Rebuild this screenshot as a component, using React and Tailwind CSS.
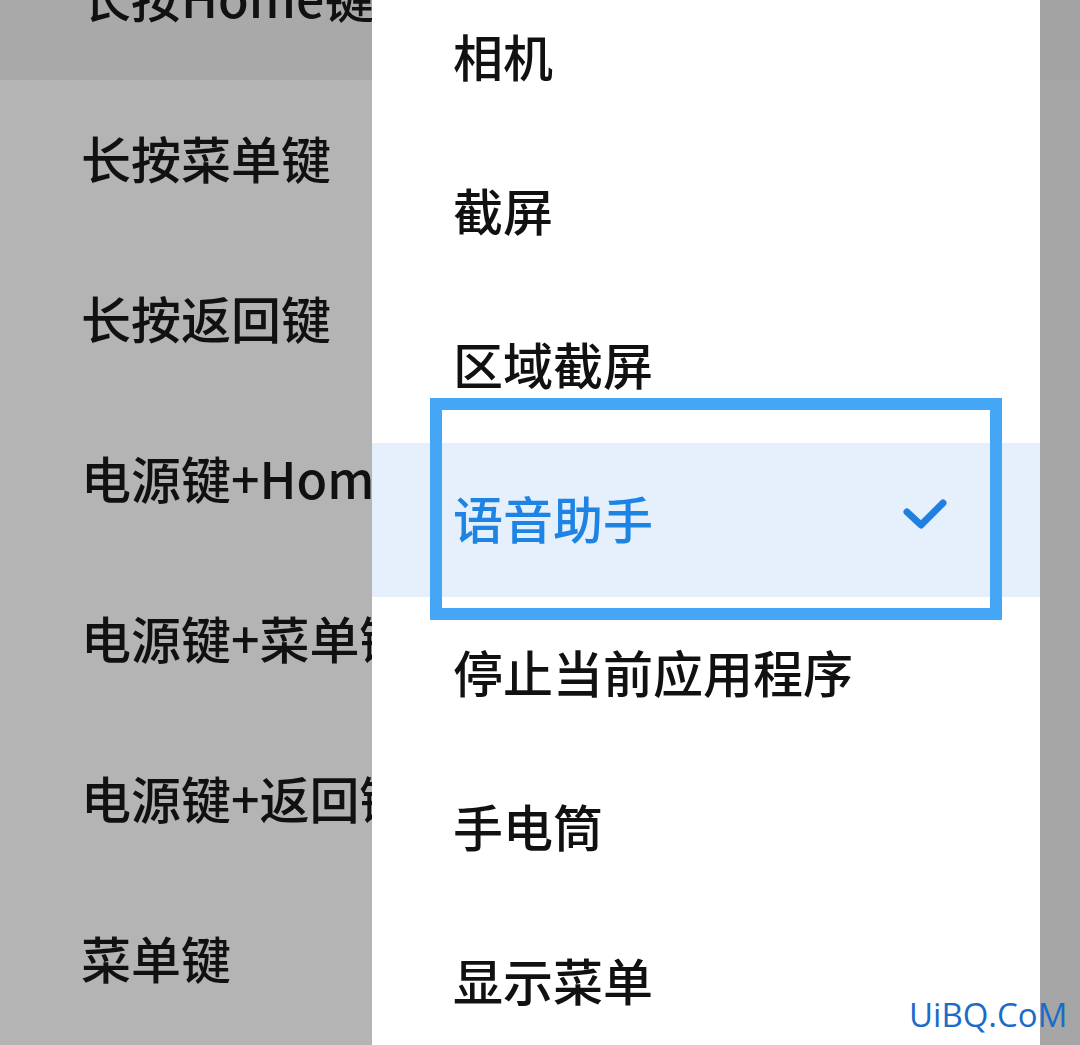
const leftRows = ["长按菜单键", "长按返回键", "电源键+Home键", "电源键+菜单键", "电源键+返回键", "菜单键"];

const menuItems = ["相机", "截屏", "区域截屏", "语音助手", "停止当前应用程序", "手电筒", "显示菜单"];

function Check() {
  return (
    <svg width="46" height="36" viewBox="0 0 46 36" className="shrink-0">
      <polyline
        points="5,13 19,26 41,4"
        fill="none"
        stroke="#1f80e2"
        strokeWidth="7"
        strokeLinecap="round"
        strokeLinejoin="round"
      />
    </svg>
  );
}

export default function App() {
  return (
    <div
      className="relative flex h-[1045px] w-[1080px] overflow-hidden bg-[#b4b4b4] text-[#111]"
      style={{ fontFamily: '"Noto Sans CJK SC", "Noto Sans", sans-serif' }}
    >
      {/* dimmed settings list behind the dialog */}
      <div className="flex w-[372px] shrink-0 flex-col overflow-hidden whitespace-nowrap">
        <div className="flex h-[80px] shrink-0 items-start overflow-hidden bg-[#a9a9a9] pl-[81px]">
          <span className="mt-[-29px] text-[50px] font-medium leading-none">长按Home键</span>
        </div>
        {leftRows.map((t) => (
          <div key={t} className="flex h-[160px] shrink-0 items-center pb-[6px] pl-[81px]">
            <span className="text-[50px] font-medium leading-none">{t}</span>
          </div>
        ))}
      </div>

      {/* popup menu */}
      <div className="mt-[-19px] flex w-[668px] shrink-0 flex-col bg-white">
        {menuItems.map((t) => {
          const active = t === "语音助手";
          return (
            <div
              key={t}
              className={
                active
                  ? "flex h-[154px] shrink-0 items-center justify-between bg-[#e6f0fc] pb-[6px] pl-[81px] pr-[92px]"
                  : "flex h-[154px] shrink-0 items-center pb-[6px] pl-[81px]"
              }
            >
              <span
                className={
                  active
                    ? "text-[50px] font-medium leading-none text-[#1e84e4]"
                    : "text-[50px] font-medium leading-none"
                }
              >
                {t}
              </span>
              {active && <Check />}
            </div>
          );
        })}
      </div>

      {/* right edge of the dimmed screen */}
      <div className="flex w-[40px] shrink-0 flex-col bg-[#a6a6a6]">
        <div className="h-[80px] bg-[#a3a3a3]" />
      </div>

      {/* annotation frame */}
      <div className="pointer-events-none absolute left-[430px] top-[398px] h-[222px] w-[572px] border-[12px] border-[#45a6f6]" />

      {/* watermark */}
      <div
        className="absolute left-[909px] top-[998px] text-[33px] leading-none text-[#1a6cc8]"
        style={{ fontFamily: '"Open Sans", sans-serif' }}
      >
        UiBQ.CoM
      </div>
    </div>
  );
}
